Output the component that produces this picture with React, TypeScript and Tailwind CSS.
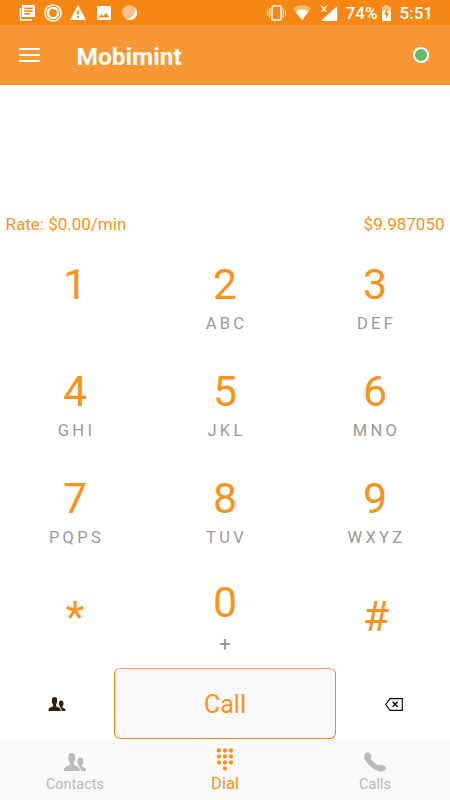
import { useState, type ReactNode } from "react";

type Key = {
  digit: string;
  letters?: string;
};

type TabName = "Contacts" | "Dial" | "Calls";

const KEY_ROWS: Key[][] = [
  [{ digit: "1", letters: "" }, { digit: "2", letters: "ABC" }, { digit: "3", letters: "DEF" }],
  [{ digit: "4", letters: "GHI" }, { digit: "5", letters: "JKL" }, { digit: "6", letters: "MNO" }],
  [{ digit: "7", letters: "PQPS" }, { digit: "8", letters: "TUV" }, { digit: "9", letters: "WXYZ" }],
];

function PeopleIcon({ className }: { className: string }) {
  return (
    <svg viewBox="0 0 22 18" fill="currentColor" className={className}>
      <path d="M7.800 0C5.300 0 4.400 1.500 4.400 3.500L4.500 5C4 5.300 4.300 6.800 4.900 7.300 5.100 8.600 5.500 9.200 5.900 9.600V11.600C5.500 12.700 3.200 13 1.600 13.900.3 14.600 0 16 0 18H15.700C15.700 16 15.400 14.600 14.100 13.900 12.500 13 10.200 12.700 9.800 11.600V9.600C10.200 9.200 10.500 8.600 10.700 7.300 11.300 6.800 11.600 5.300 11.100 5L11.200 3.500C11.200 1.500 10.300 0 7.800 0Z" />
      <path d="M16.400 4.400C14.300 4.400 13.500 5.700 13.500 7.400L13.600 8.600C13.200 8.900 13.400 10 13.900 10.400 14.100 11.400 14.400 11.900 14.800 12.200V13.200C16.200 13.900 17 15.500 17 18H22C22 16.400 21.800 15.400 20.800 14.800 19.700 14.200 18.300 14.200 18 13.300V12.200C18.400 11.900 18.700 11.400 18.900 10.400 19.400 10 19.600 8.900 19.200 8.600L19.300 7.400C19.300 5.700 18.500 4.400 16.400 4.400Z" />
    </svg>
  );
}

function DialpadIcon() {
  const dots = [0, 1, 2].flatMap((row) => [0, 1, 2].map((column) => [column, row]));

  return (
    <svg viewBox="0 0 18 23" fill="currentColor" className="h-[23px] w-[18px]">
      {dots.map(([column, row]) => (
        <circle key={`${column}-${row}`} cx={3 + column * 6} cy={2.5 + row * 6} r="2.150" />
      ))}
      <circle cx="9" cy="20.500" r="2.150" />
    </svg>
  );
}

function PhoneIcon() {
  return (
    <svg viewBox="0 0 22 20" className="h-5 w-[22px]">
      <path
        d="M3 4.500C4.500 10.500 10.500 15.900 17.500 16.600"
        fill="none"
        stroke="currentColor"
        strokeWidth="5.200"
      />
      <path
        d="M.2 3.500C.6 1.500 2.200.1 4.100.2c1.900.2 3.300 2.400 3.200 4.100-.1 1.700-1.700 2-1.900 3.500L1.400 8.800C.4 7.100-.1 5.300.2 3.500ZM13.500 14.800c1.300-.3 1.800-1.700 3.600-1.800 2-.1 4.800 1.400 4.800 3.200 0 1.500-2 3-3.700 3.400-1.600.3-3.200 0-4.800-.7Z"
        fill="currentColor"
      />
    </svg>
  );
}

function BackspaceIcon() {
  return (
    <svg viewBox="0 0 18 13" fill="none" stroke="currentColor" className="h-[13px] w-[18px]">
      <path d="M5 .6h12.300v11.800H5L.7 6.500Z" strokeWidth="1.100" />
      <path d="m7.600 3.800 5 5m0-5-5 5" strokeWidth="1.300" />
    </svg>
  );
}

function StatusBar() {
  return (
    <div className="flex h-[25px] items-center justify-between bg-[#f68712] pr-[17px] pl-[19px] text-white">
      <div className="flex items-center">
        <svg viewBox="0 0 16 16" className="h-4 w-4">
          <path d="M3 0h13v12H3Zm2.300 2.500V4h8.400V2.500Zm0 2.800v1.500h8.400V5.300Zm0 2.800v1.500h5.500V8.100Z" fill="currentColor" fillRule="evenodd" />
          <path d="M1.500 3v12H13" fill="none" stroke="currentColor" strokeWidth="1.500" />
        </svg>
        <svg viewBox="0 0 18 18" fill="none" stroke="currentColor" className="ml-[9px] h-[18px] w-[18px]">
          <circle cx="9" cy="9" r="8.100" strokeWidth="1.500" />
          <circle cx="9" cy="9" r="5.100" strokeWidth="2.400" />
        </svg>
        <svg viewBox="0 0 16 15" fill="currentColor" fillRule="evenodd" className="ml-2 h-[15px] w-4">
          <path d="M8 0 16 15H0Zm-.9 5.500v4h1.800v-4Zm0 5.500v1.900h1.800V11Z" />
        </svg>
        <svg viewBox="0 0 14 14" fill="currentColor" fillRule="evenodd" className="ml-[11px] h-3.5 w-3.5">
          <path d="M1.500 0h11A1.500 1.500 0 0 1 14 1.500v11a1.500 1.500 0 0 1-1.500 1.500h-11A1.500 1.500 0 0 1 0 12.500v-11A1.500 1.500 0 0 1 1.500 0ZM1.800 11.500h10.500L8.900 7 6.200 10.300 4.300 8.100Z" />
        </svg>
        <svg viewBox="0 0 15 15" fill="currentColor" className="ml-[11px] h-[15px] w-[15px]">
          <circle cx="7.500" cy="7.500" r="7.300" opacity=".5" />
          <path d="M13.300 3a7.300 7.300 0 0 1-9 11.200C9.500 14 13.800 9.500 13.300 3Z" />
        </svg>
      </div>

      <div className="flex items-center">
        <svg viewBox="0 0 19 16" fill="none" stroke="currentColor" className="h-4 w-[19px]">
          <rect x="5" y=".9" width="9" height="14.200" rx="1" strokeWidth="1.500" />
          <path d="M2.700 3.500v9M.6 5.500v5M16.300 3.500v9M18.400 5.500v5" strokeWidth="1.100" />
        </svg>
        <svg viewBox="0 0 18 15" fill="currentColor" className="ml-[7px] h-[15px] w-[18px]">
          <path d="M0 3.500C5-1 13-1 18 3.500L9 15Z" opacity=".4" />
          <path d="M2.600 6.700C6.500 3.600 11.500 3.600 15.400 6.700L9 15Z" />
        </svg>
        <svg viewBox="0 0 18 16" className="ml-[9px] h-4 w-[18px]">
          <path d="M17.200 1v15H1Z" fill="currentColor" />
          <path d="m1.500.8 5 6m0-6-5 6" fill="none" stroke="currentColor" strokeWidth="1.300" />
        </svg>
        <span className="ml-[8px] pt-[2px] text-[17px] leading-none font-medium">74%</span>
        <svg viewBox="0 0 9 16" className="ml-[4px] h-4 w-[9px]">
          <path d="M2.500 0h4v1.700H9v4.100H0V1.700h2.500Z" fill="currentColor" opacity=".5" />
          <path d="M0 5.500h9V16H0Z" fill="currentColor" />
          <path d="M5.300 3.700 2 9.500h2v4.300l3.200-5.900H5.300Z" fill="#f68712" />
        </svg>
        <span className="ml-[9px] pt-[2px] text-[17px] leading-none font-medium">5:51</span>
      </div>
    </div>
  );
}

function KeyButton({ digit, letters, onPress }: Key & { onPress: (digit: string) => void }) {
  return (
    <button type="button" onClick={() => onPress(digit)} className="flex flex-col items-center">
      <span className="text-[43px] leading-[50px] text-[#f7931e]">{digit}</span>
      <span
        className={
          letters === "+"
            ? "mt-[6px] h-[22px] pl-[3px] text-[20px] leading-[22px] tracking-[3px] text-[#929292]"
            : "mt-[4px] h-[22px] pl-[3px] text-[16.500px] leading-[22px] tracking-[3.300px] text-[#999999]"
        }
      >
        {letters}
      </span>
    </button>
  );
}

export default function App() {
  const [number, setNumber] = useState("");
  const [activeTab, setActiveTab] = useState<TabName>("Dial");

  function pressKey(digit: string) {
    setNumber((current) => current + digit);
  }

  const tabs: { name: TabName; icon: ReactNode }[] = [
    { name: "Contacts", icon: <PeopleIcon className="h-[18px] w-[22px]" /> },
    { name: "Dial", icon: <DialpadIcon /> },
    { name: "Calls", icon: <PhoneIcon /> },
  ];

  return (
    <main className="flex h-[800px] w-[450px] flex-col overflow-hidden bg-white font-['Roboto',sans-serif]">
      <StatusBar />

      <header className="flex h-[60px] items-center border-b border-[#f68712] bg-[#f89835] pr-[21px] pl-[19px]">
        <button type="button" aria-label="Menu" className="flex w-[21px] flex-col gap-[4px]">
          <span className="h-[2px] bg-white" />
          <span className="h-[2px] bg-white" />
          <span className="h-[2px] bg-white" />
        </button>
        <h1 className="ml-[36.500px] flex-1 pt-[4px] text-[24.500px] leading-7 font-bold text-white">Mobimint</h1>
        <span className="h-4 w-4 rounded-full border-2 border-white bg-[#63bb6a]" />
      </header>

      <div className="flex h-[128px] items-center justify-center text-4xl text-[#f7931e]">{number}</div>

      <div className="flex h-[22px] items-center justify-between pr-[5.500px] pl-[5.500px] text-[17px] leading-[22px] text-[#f7931e]">
        <span>Rate: $0.00/min</span>
        <span>$9.987050</span>
      </div>

      <div className="h-[433px] pt-[24px]">
        {KEY_ROWS.map((row) => (
          <div key={row[0].digit} className="grid h-[107px] grid-cols-3 items-start">
            {row.map((key) => (
              <KeyButton key={key.digit} {...key} onPress={pressKey} />
            ))}
          </div>
        ))}
        <div className="-mt-[3px] grid grid-cols-3 items-start">
          <button type="button" onClick={() => pressKey("*")} className="pt-[14px] text-[43px] leading-[50px] text-[#f7931e]">
            *
          </button>
          <KeyButton digit="0" letters="+" onPress={pressKey} />
          <button type="button" onClick={() => pressKey("#")} className="pt-[14px] pl-[2px] text-[43px] leading-[50px] text-[#f7931e]">
            #
          </button>
        </div>
      </div>

      <div className="grid h-[72px] grid-cols-[114px_222px_114px] items-center">
        <button type="button" aria-label="Choose contact" className="flex justify-center text-[#2f2008]">
          <PeopleIcon className="h-[14px] w-[18px]" />
        </button>
        <button
          type="button"
          className="h-[71px] self-start rounded-[6px] border border-[#f68712] border-t-[#f9a06c] bg-[#f9f9f9] pt-[3px] text-[25px] text-[#f7931e]"
        >
          Call
        </button>
        <button
          type="button"
          aria-label="Delete digit"
          onClick={() => setNumber((current) => current.slice(0, -1))}
          className="flex justify-center pl-[1px] text-black"
        >
          <BackspaceIcon />
        </button>
      </div>

      <nav className="grid h-[60px] grid-cols-3 bg-[#f9f9f9]">
        {tabs.map(({ name, icon }) => (
          <button
            key={name}
            type="button"
            onClick={() => setActiveTab(name)}
            className={
              activeTab === name
                ? "flex flex-col items-center text-[16.500px] text-[#f7931e]"
                : "flex flex-col items-center text-[14.500px] text-[#bbbbbb]"
            }
          >
            <span className={activeTab === name ? "flex h-[34px] items-center pt-[4px]" : "flex h-[35px] items-center pt-[9px]"}>
              {icon}
            </span>
            <span className="leading-5">{name}</span>
          </button>
        ))}
      </nav>
    </main>
  );
}
